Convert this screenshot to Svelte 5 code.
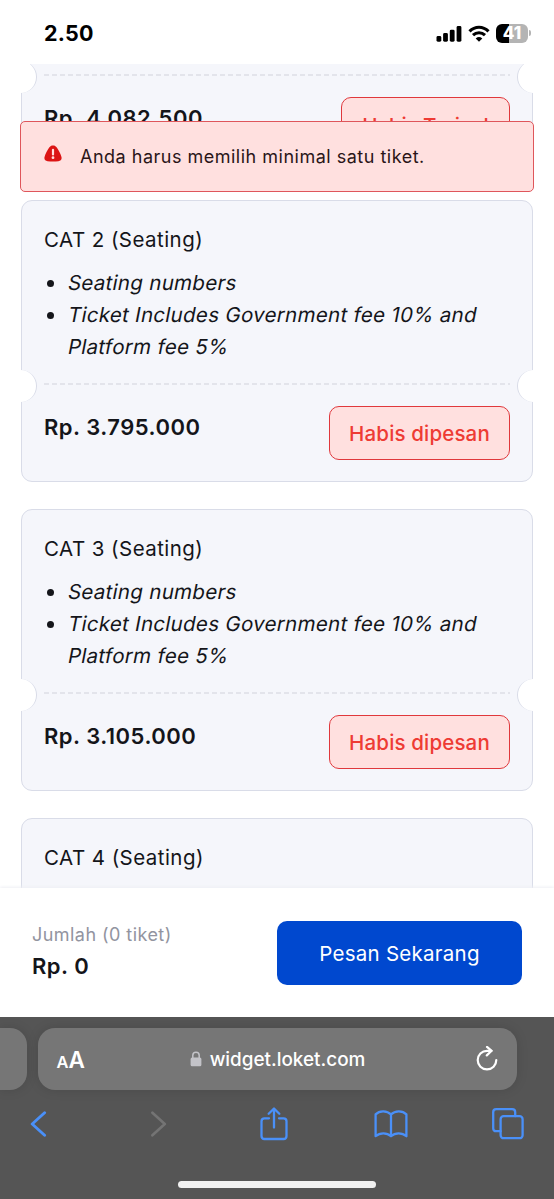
<script>
  const tickets = [
    { name: 'CAT 2 (Seating)', price: 'Rp. 3.795.000' },
    { name: 'CAT 3 (Seating)', price: 'Rp. 3.105.000' },
    { name: 'CAT 4 (Seating)', price: '' }
  ];
</script>

{#snippet foot(price, label)}
  <div class="tear">
    <span class="notch left"></span>
    <span class="dash"></span>
    <span class="notch right"></span>
  </div>
  <div class="foot">
    <strong class="price">{price}</strong>
    <span class="badge" class:tight={label === 'Habis Terjual'}>{label}</span>
  </div>
{/snippet}

<div class="screen">
  <header class="status">
    <span class="clock">2.50</span>
    <div class="indicators">
      <svg width="26" height="17" viewBox="0 0 26 17">
        <rect x="0.5" y="11" width="4.8" height="5.7" rx="1.4" />
        <rect x="7.1" y="8" width="4.8" height="8.7" rx="1.4" />
        <rect x="13.8" y="4.7" width="4.8" height="12" rx="1.4" />
        <rect x="20.6" y="1" width="4.8" height="15.7" rx="1.4" />
      </svg>
      <svg width="22" height="17" viewBox="0 0 22 17" fill="none" stroke="#000" stroke-width="3.1">
        <path d="M1.5 6.3C7 0.8 15 0.8 20.5 6.3" />
        <path d="M5 10.2C8.5 6.9 13.5 6.9 17 10.2" />
        <path d="M11 16.8L7.7 13.4Q11 10.8 14.3 13.4Z" fill="#000" stroke="none" />
      </svg>
      <div class="battery"><span class="cell">41</span><i></i></div>
    </div>
  </header>

  <main>
    <section class="card partial">
      {@render foot('Rp. 4.082.500', 'Habis Terjual')}
    </section>
    {#each tickets as t}
      <section class="card">
        <div class="info">
          <h2>{t.name}</h2>
          {#if t.price}
            <ul>
              <li><em>Seating numbers</em></li>
              <li><em>Ticket Includes Government fee 10% and</em><br /><em>Platform fee 5%</em></li>
            </ul>
          {/if}
        </div>
        {#if t.price}
          {@render foot(t.price, 'Habis dipesan')}
        {/if}
      </section>
    {/each}
    <div class="alert">
      <svg width="18" height="17" viewBox="0 0 18 17">
        <path d="M9 0.4C10.6 0.4 11.8 1 12.8 2.5C14.8 5.4 16.4 8.5 17.4 11.7C18.2 14.3 16.8 16 14.4 16.3C10.8 16.7 7.2 16.7 3.6 16.3C1.2 16 -0.2 14.3 0.6 11.7C1.6 8.5 3.2 5.4 5.2 2.5C6.2 1 7.4 0.4 9 0.4Z" fill="#dc1414" />
        <path d="M9 4.8V9.4" stroke="#ffe0df" stroke-width="2.2" stroke-linecap="round" />
        <circle cx="9" cy="12.7" r="1.4" fill="#ffe0df" />
      </svg>
      <span>Anda harus memilih minimal satu tiket.</span>
    </div>
  </main>

  <footer class="order">
    <div>
      <p class="count">Jumlah (0 tiket)</p>
      <p class="total">Rp. 0</p>
    </div>
    <button>Pesan Sekarang</button>
  </footer>

  <nav class="browser">
    <div class="tabs">
      <div class="tab previous"></div>
      <div class="tab current">
        <span class="reader"><small>A</small>A</span>
        <span class="address">
          <svg width="12" height="16" viewBox="0 0 12 16">
            <path d="M2.8 7V4.2C2.8 0.1 9.2 0.1 9.2 4.2V7" fill="none" stroke="#c3c3c8" stroke-width="1.5" />
            <rect x="0.6" y="6.5" width="10.8" height="8.7" rx="1.5" fill="#c3c3c8" />
          </svg>
          <span>widget.loket.com</span>
        </span>
        <svg class="reload" width="22" height="26" viewBox="0 0 22 26" fill="none" stroke="#fff" stroke-width="2.2" stroke-linecap="round" stroke-linejoin="round">
          <path d="M15.5 4.8H11A9.3 9.3 0 1 0 20.3 14.1" />
          <path d="M11 0.9L15.6 4.8L10.8 9.4" />
        </svg>
      </div>
    </div>
    <div class="tools">
      <svg class="back" width="17" height="26" viewBox="0 0 17 26"><path d="M14.6 1.7L2.2 13L14.6 24.3" /></svg>
      <svg class="forward" width="17" height="26" viewBox="0 0 17 26"><path d="M2.4 1.7L14.8 13L2.4 24.3" /></svg>
      <svg class="share" width="28" height="34" viewBox="0 0 28 34">
        <path d="M9 11.3H4.5Q1.5 11.3 1.5 14.3V29Q1.5 32 4.5 32H23.5Q26.5 32 26.5 29V14.3Q26.5 11.3 23.5 11.3H19" />
        <path d="M14 20.5V2M8.7 6.7L14 1.5L19.3 6.7" />
      </svg>
      <svg class="book" width="34" height="28" viewBox="0 0 34 28">
        <path d="M17 4.4C13 0.4 5.5 0.2 1.6 4.4V26.2C6 22.4 12.8 22.4 17 26.2C21.2 22.4 28 22.4 32.4 26.2V4.4C28.5 0.2 21 0.4 17 4.4V26" />
      </svg>
      <svg class="pages" width="32" height="32" viewBox="0 0 32 32">
        <rect x="8.6" y="8.2" width="22" height="22" rx="3" />
        <path d="M8.6 23.2H4.2Q1.2 23.2 1.2 20.2V4.2Q1.2 1.2 4.2 1.2H20.2Q23.2 1.2 23.2 4.2V8.2" />
      </svg>
    </div>
    <div class="home"></div>
  </nav>
</div>

<style>
  :global(body) { margin: 0; background: #fff; }
  * { box-sizing: border-box; }
  .screen {
    width: 554px; height: 1199px; display: flex; flex-direction: column; overflow: hidden;
    background: #fff; color: #14151a; font-family: Inter, "Liberation Sans", sans-serif;
  }
  .status { height: 64px; flex: none; display: flex; justify-content: space-between; align-items: flex-start; padding: 23px 23px 0 44px; color: #000; }
  .clock { font-size: 21.5px; line-height: 21px; font-weight: 700; letter-spacing: 0.2px; }
  .indicators { display: flex; align-items: center; gap: 6px; height: 20px; }
  .battery { display: flex; align-items: center; gap: 1px; }
  .cell {
    width: 32px; height: 19px; border-radius: 6px; color: #fff; font-size: 17px; line-height: 19px; font-weight: 800;
    text-align: center; background: linear-gradient(90deg, #000 42%, #b4b4b4 42%);
  }
  .battery i { width: 2px; height: 6px; border-radius: 0 2px 2px 0; background: #b4b4b4; }

  main { position: relative; flex: none; height: 824px; overflow: hidden; padding: 0 21px; display: flex; flex-direction: column; gap: 27px; }
  .card { flex: none; height: 282px; width: 512px; border: 1px solid #d9dce8; border-radius: 11px; background: #f5f6fb; }
  .partial { height: 109px; border-top: 0; border-radius: 0 0 11px 11px; padding-top: 10px; }
  .info { height: 182px; padding: 23px 22px 0; }
  h2 { margin: 0; font-size: 20.5px; line-height: 32px; font-weight: 400; letter-spacing: 0.45px; }
  ul { margin: 11px 0 0; padding-left: 23px; font-size: 20.5px; line-height: 32px; letter-spacing: 0.3px; white-space: nowrap; }
  em { display: inline-block; font-style: normal; transform: skewX(-11deg); transform-origin: 0 70%; }
  .tear { position: relative; height: 2px; padding: 0 22px; display: flex; }
  .dash { flex: 1; background: repeating-linear-gradient(90deg, #e3e4eb 0 5px, transparent 5px 8px); }
  .notch { position: absolute; top: -13px; width: 32px; height: 32px; border-radius: 50%; background: #fff; }
  .left { left: -17px; border-right: 1px solid #d9dce8; }
  .right { right: -17px; border-left: 1px solid #d9dce8; }
  .foot { display: flex; justify-content: space-between; align-items: flex-start; padding: 21px 22px 0; }
  .price { margin-top: 5px; font-size: 22px; line-height: 32px; font-weight: 600; letter-spacing: 0.5px; }
  .badge {
    width: 181px; height: 54px; border: 1px solid #e0383c; border-radius: 10px; background: #ffe0df; color: #ee3b34;
    font-size: 20.5px; line-height: 53px; font-weight: 500; letter-spacing: 0.15px; text-align: center; white-space: nowrap;
  }
  .tight { width: 169px; line-height: 55px; letter-spacing: -0.1px; }
  .alert {
    position: absolute; left: 20px; top: 57px; width: 514px; height: 71px; display: flex; align-items: center; gap: 18px; padding-left: 23px;
    border: 1px solid #df565b; border-radius: 5px; background: #ffe0df; color: #2a1518; font-size: 18px; letter-spacing: 0.5px;
  }
  .alert svg { margin-top: -6px; }

  .order { height: 129px; flex: none; display: flex; justify-content: space-between; align-items: flex-start; padding: 33px 32px 0; box-shadow: 0 -1px 3px #eeeff4; z-index: 1; background: #fff; }
  p { margin: 0; }
  .count { font-size: 18px; line-height: 28px; color: #9294a0; letter-spacing: 0.45px; }
  .total { font-size: 22px; line-height: 34px; font-weight: 600; letter-spacing: 0.5px; }
  button { width: 245px; height: 64px; border: 0; border-radius: 10px; background: #0048cf; color: #fff; font: 400 20.5px/64px Inter, sans-serif; letter-spacing: 0.25px; }

  .browser { flex: 1; background: #555; z-index: 2; padding-top: 11px; }
  .tabs { display: flex; gap: 11px; height: 62px; }
  .tab { background: #767676; border-radius: 17px; box-shadow: 0 0 12px #0002; }
  .previous { width: 26.5px; border-radius: 0 17px 17px 0; }
  .current { width: 479px; display: flex; justify-content: space-between; align-items: center; padding: 0 19px; color: #fff; }
  .reader { font-size: 22.5px; font-weight: 600; width: 23px; white-space: nowrap; }
  .reader small { font-size: 16.5px; }
  .address { display: flex; align-items: center; gap: 8px; font-size: 18.9px; font-weight: 500; }
  .tools { display: flex; align-items: center; height: 34px; margin-top: 17px; padding-left: 30px; }
  .tools svg { flex: none; fill: none; stroke: #4a90f8; stroke-width: 2.3; stroke-linecap: round; stroke-linejoin: round; }
  .tools .back { stroke-width: 2.9; }
  .tools .forward { stroke: #747474; stroke-width: 2.6; margin-left: 103px; }
  .tools .share { margin-left: 93px; }
  .tools .book { margin-left: 86px; }
  .tools .pages { margin-left: 84px; }
  .home { width: 198px; height: 7px; border-radius: 4px; background: #f0f0f0; margin: 40px auto 0; }
</style>
